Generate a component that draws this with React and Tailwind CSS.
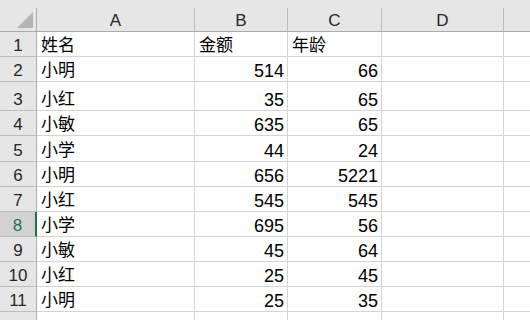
const rows = [
  { n: 1, h: "h-[25px]", a: "姓名", b: "金额", c: "年龄", text: true },
  { n: 2, h: "h-[25px]", a: "小明", b: "514", c: "66" },
  { n: 3, h: "h-[29px]", a: "小红", b: "35", c: "65" },
  { n: 4, h: "h-[25px]", a: "小敏", b: "635", c: "65" },
  { n: 5, h: "h-[26px]", a: "小学", b: "44", c: "24" },
  { n: 6, h: "h-[25px]", a: "小明", b: "656", c: "5221" },
  { n: 7, h: "h-[25px]", a: "小红", b: "545", c: "545" },
  { n: 8, h: "h-[25px]", a: "小学", b: "695", c: "56", active: true },
  { n: 9, h: "h-[25px]", a: "小敏", b: "45", c: "64" },
  { n: 10, h: "h-[25px]", a: "小红", b: "25", c: "45" },
  { n: 11, h: "h-[25px]", a: "小明", b: "25", c: "35" },
];

const cols = [
  { key: "A", w: "w-[158px]" },
  { key: "B", w: "w-[93px]" },
  { key: "C", w: "w-[94px]" },
  { key: "D", w: "w-[122px]" },
];

const HeaderRow = () => (
  <div className="flex h-[32px] border-b border-[#ababab] bg-[#e6e6e6] shrink-0">
    <div className="w-[37px] flex flex-col shrink-0">
      <div className="h-2" />
      <div className="flex-1 border-r border-[#ababab] flex items-center justify-center">
        <svg width="36" height="23" viewBox="0 0 36 23">
          <polygon points="17,20 33,4 33,20" fill="#b4b4b4" />
        </svg>
      </div>
    </div>
    {cols.map((c) => (
      <div key={c.key} className={`${c.w} flex flex-col shrink-0`}>
        <div className="h-2" />
        <div className="flex-1 border-r border-[#bcbcbc] flex items-end justify-center leading-[20px] text-[#262626]">
          {c.key}
        </div>
      </div>
    ))}
    <div className="flex-1" />
  </div>
);

const Row = ({ r }) => (
  <div className={`flex ${r.h} shrink-0`}>
    <div
      className={
        r.active
          ? "w-[37px] shrink-0 bg-[#d2d2d2] border-r-2 border-r-[#217346] border-b border-b-[#bdbdbd] flex items-end justify-center leading-[20px] text-[#217346]"
          : "w-[37px] shrink-0 bg-[#e6e6e6] border-r border-r-[#ababab] border-b border-b-[#bdbdbd] flex items-end justify-center leading-[20px] text-[#262626]"
      }
    >
      {r.n}
    </div>
    <div className="w-[158px] shrink-0 border-r border-b border-[#d4d4d4] flex items-end pl-[4px] leading-[20px]">
      {r.a}
    </div>
    <div
      className={`w-[93px] shrink-0 border-r border-b border-[#d4d4d4] flex items-end leading-[20px] ${
        r.text ? "pl-[4px]" : "justify-end pr-[3px] text-[18px]"
      }`}
    >
      {r.b}
    </div>
    <div
      className={`w-[94px] shrink-0 border-r border-b border-[#d4d4d4] flex items-end leading-[20px] ${
        r.text ? "pl-[4px]" : "justify-end pr-[3px] text-[18px]"
      }`}
    >
      {r.c}
    </div>
    <div className="w-[122px] shrink-0 border-r border-b border-[#d4d4d4]" />
    <div className="flex-1 border-b border-[#d4d4d4]" />
  </div>
);

const App = () => {
  return (
    <div className="w-[530px] h-[320px] overflow-hidden bg-white flex flex-col text-[17px] text-black font-['Liberation_Sans','Noto_Sans_CJK_SC',sans-serif]">
      <HeaderRow />
      {rows.map((r) => (
        <Row key={r.n} r={r} />
      ))}
      <div className="flex flex-1">
        <div className="w-[37px] shrink-0 bg-[#e6e6e6] border-r border-[#ababab]" />
        <div className="w-[158px] shrink-0 border-r border-[#d4d4d4]" />
        <div className="w-[93px] shrink-0 border-r border-[#d4d4d4]" />
        <div className="w-[94px] shrink-0 border-r border-[#d4d4d4]" />
        <div className="w-[122px] shrink-0 border-r border-[#d4d4d4]" />
        <div className="flex-1" />
      </div>
    </div>
  );
};

App.displayName = "App";
export default App;
